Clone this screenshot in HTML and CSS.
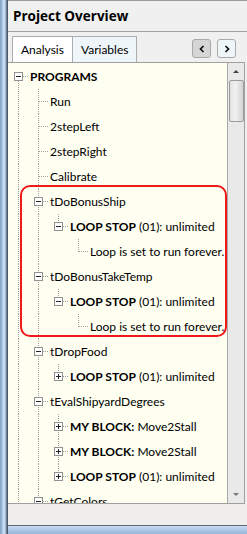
FILE: index.html
```html
<!DOCTYPE html>
<html lang="en">
<head>
    <meta charset="UTF-8">
    <title>Project Overview</title>
    <link rel="stylesheet" href="styles.css">
</head>
<body>
    <div class="window">
        <div class="frame-left"></div>
        <div class="panel">
            <h1 class="title">Project Overview</h1>

            <div class="tabbar">
                <div class="tabs">
                    <div class="tab active">Analysis</div>
                    <div class="tab">Variables</div>
                </div>
                <div class="nav">
                    <button class="nav-btn pressed">
                        <svg width="8" height="8" viewBox="0 0 8 8"><polyline points="5.5,1 2.5,4 5.5,7" fill="none" stroke="#111" stroke-width="1.7"/></svg>
                    </button>
                    <button class="nav-btn">
                        <svg width="8" height="8" viewBox="0 0 8 8"><polyline points="2.5,1 5.5,4 2.5,7" fill="none" stroke="#111" stroke-width="1.7"/></svg>
                    </button>
                </div>
            </div>

            <div class="tree-wrap">
                <div class="tree">
                    <div class="row">
                        <span class="cell v bot h"><i class="box minus"></i></span>
                        <span class="label"><b>PROGRAMS</b></span>
                    </div>
                    <div class="row">
                        <span class="cell v"></span><span class="cell v h"></span>
                        <span class="label">Run</span>
                    </div>
                    <div class="row">
                        <span class="cell v"></span><span class="cell v h"></span>
                        <span class="label">2stepLeft</span>
                    </div>
                    <div class="row">
                        <span class="cell v"></span><span class="cell v h"></span>
                        <span class="label">2stepRight</span>
                    </div>
                    <div class="row">
                        <span class="cell v"></span><span class="cell v h"></span>
                        <span class="label">Calibrate</span>
                    </div>

                    <div class="row">
                        <span class="cell v"></span><span class="cell v h"><i class="box minus"></i></span>
                        <span class="label">tDoBonusShip</span>
                    </div>
                    <div class="row">
                        <span class="cell v"></span><span class="cell v"></span><span class="cell v top h"><i class="box minus"></i></span>
                        <span class="label"><b>LOOP STOP</b> (01): unlimited</span>
                    </div>
                    <div class="row">
                        <span class="cell v"></span><span class="cell v"></span><span class="cell"></span><span class="cell v top h"></span>
                        <span class="label">Loop is set to run forever.</span>
                    </div>

                    <div class="row">
                        <span class="cell v"></span><span class="cell v h"><i class="box minus"></i></span>
                        <span class="label">tDoBonusTakeTemp</span>
                    </div>
                    <div class="row">
                        <span class="cell v"></span><span class="cell v"></span><span class="cell v top h"><i class="box minus"></i></span>
                        <span class="label"><b>LOOP STOP</b> (01): unlimited</span>
                    </div>
                    <div class="row">
                        <span class="cell v"></span><span class="cell v"></span><span class="cell"></span><span class="cell v top h"></span>
                        <span class="label">Loop is set to run forever.</span>
                    </div>

                    <div class="row">
                        <span class="cell v"></span><span class="cell v h"><i class="box minus"></i></span>
                        <span class="label">tDropFood</span>
                    </div>
                    <div class="row">
                        <span class="cell v"></span><span class="cell v"></span><span class="cell v top h"><i class="box plus"></i></span>
                        <span class="label"><b>LOOP STOP</b> (01): unlimited</span>
                    </div>

                    <div class="row">
                        <span class="cell v"></span><span class="cell v h"><i class="box minus"></i></span>
                        <span class="label">tEvalShipyardDegrees</span>
                    </div>
                    <div class="row">
                        <span class="cell v"></span><span class="cell v"></span><span class="cell v h"><i class="box plus"></i></span>
                        <span class="label"><b>MY BLOCK:</b> Move2Stall</span>
                    </div>
                    <div class="row">
                        <span class="cell v"></span><span class="cell v"></span><span class="cell v h"><i class="box plus"></i></span>
                        <span class="label"><b>MY BLOCK:</b> Move2Stall</span>
                    </div>
                    <div class="row">
                        <span class="cell v"></span><span class="cell v"></span><span class="cell v top h"><i class="box plus"></i></span>
                        <span class="label"><b>LOOP STOP</b> (01): unlimited</span>
                    </div>

                    <div class="row">
                        <span class="cell v"></span><span class="cell v h"><i class="box minus"></i></span>
                        <span class="label">tGetColors</span>
                    </div>

                    <div class="highlight"></div>
                </div>
                <div class="scrollbar">
                    <div class="arrow up"></div>
                    <div class="track"><div class="thumb"></div></div>
                    <div class="arrow down"></div>
                </div>
            </div>

            <div class="status"></div>
        </div>
        <div class="frame-bottom"></div>
    </div>
</body>
</html>
```

FILE: styles.css
```css
* {
    box-sizing: border-box;
}
body {
    margin: 0;
    width: 247px;
    height: 534px;
    overflow: hidden;
    font-family: Lato, "Open Sans", sans-serif;
    font-size: 12px;
    color: #000;
}
.window {
    display: grid;
    grid-template-columns: 8px 1fr;
    grid-template-rows: 1fr 9px;
    height: 534px;
}
.frame-left {
    grid-row: 1 / 3;
    background: linear-gradient(to right, #7f9fc4 0, #9dbbdc 2px, #c6daef 3px, #c6daef 5px, #8aa2c0 6px, #4d5868 7px);
}
.frame-bottom {
    border-top: 1px solid #5c6674;
    background: linear-gradient(to bottom, #c9dcf1, #a8c4e3 60%, #9ab8da);
}
.panel {
    display: flex;
    flex-direction: column;
    background: #f0f0f0;
    border-top: 1px solid #9a9a9a;
    min-height: 0;
}
.title {
    margin: 0;
    height: 31px;
    padding: 7px 0 0 5px;
    font-family: "Open Sans", sans-serif;
    font-size: 13.5px;
    font-weight: bold;
    line-height: 17px;
    border-bottom: 1px solid #a0a0a0;
}
.tabbar {
    height: 30px;
    display: flex;
    justify-content: space-between;
    align-items: flex-end;
    padding: 0 11px 0 4px;
}
.tabs {
    display: flex;
}
.tab {
    height: 26px;
    padding: 5px 8px 0 8px;
    border: 1px solid #acacac;
    border-bottom: none;
    background: #eef6f9;
}
.tab + .tab {
    border-left: none;
}
.tab.active {
    background: #fff;
}
.nav {
    display: flex;
    gap: 6px;
    align-self: center;
    margin-top: 3px;
}
.nav-btn {
    width: 19px;
    height: 19px;
    padding: 0;
    border: 1px solid #a9a9a9;
    border-radius: 3px;
    background: #eef6f9;
    display: flex;
    align-items: center;
    justify-content: center;
}
.nav-btn.pressed {
    background: #d6d6d6;
}
.tree-wrap {
    display: flex;
    height: 442px;
    border-top: 1px solid #a0a0a0;
    border-bottom: 1px solid #a0a0a0;
    margin-right: 2px;
}
.tree {
    position: relative;
    flex: 1;
    overflow: hidden;
    padding-top: 1px;
    background: #fefef1;
    border-right: 1px solid #a8a8a8;
}
.row {
    display: flex;
    align-items: center;
    height: 25px;
    white-space: nowrap;
}
.cell {
    position: relative;
    flex: none;
    width: 20px;
    height: 25px;
    display: flex;
    align-items: center;
}
.cell.v::before {
    content: "";
    position: absolute;
    left: 10px;
    top: 0;
    bottom: 0;
    width: 1px;
    background: repeating-linear-gradient(to bottom, #a0a0a0 0 1px, transparent 1px 2px);
}
.cell.v.top::before {
    bottom: 12px;
}
.cell.v.bot::before {
    top: 13px;
}
.cell.h::after {
    content: "";
    position: absolute;
    left: 11px;
    right: 0;
    top: 12px;
    height: 1px;
    background: repeating-linear-gradient(to right, #a0a0a0 0 1px, transparent 1px 2px);
}
.box {
    position: relative;
    z-index: 1;
    width: 9px;
    height: 9px;
    margin-left: 6px;
    border: 1px solid #919191;
    background: #fff;
}
.box::before {
    content: "";
    position: absolute;
    left: 1px;
    top: 3px;
    width: 5px;
    height: 1px;
    background: #222;
}
.box.plus::after {
    content: "";
    position: absolute;
    left: 3px;
    top: 1px;
    width: 1px;
    height: 5px;
    background: #222;
}
.label {
    padding-left: 2px;
}
.highlight {
    position: absolute;
    left: 12px;
    top: 122px;
    width: 207px;
    height: 152px;
    border: 2px solid #f01818;
    border-radius: 10px;
}
.scrollbar {
    width: 17px;
    flex: none;
    display: flex;
    flex-direction: column;
    background: #e9e9e9;
    border-right: 1px solid #a0a0a0;
}
.arrow {
    height: 17px;
    display: flex;
    align-items: center;
    justify-content: center;
}
.arrow::before {
    content: "";
    border-left: 3px solid transparent;
    border-right: 3px solid transparent;
}
.arrow.up::before {
    border-bottom: 3px solid #444;
}
.arrow.down::before {
    border-top: 3px solid #777;
}
.track {
    flex: 1;
}
.thumb {
    height: 42px;
    margin: 0 0 0 1px;
    border: 1px solid #9c9c9c;
    border-radius: 2px;
    background: linear-gradient(to right, #e2e2e2, #f2f2f2 40%, #d4d4d4);
}
.status {
    flex: 1;
    background: #efeeed;
}
```
